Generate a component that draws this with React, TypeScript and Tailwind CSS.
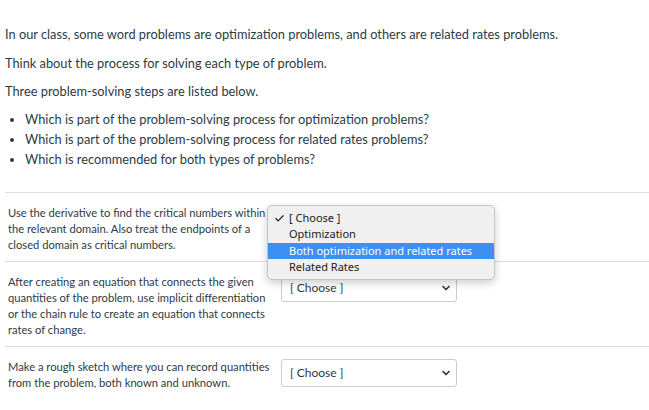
import { ChevronDown, Check } from "lucide-react";

const rows = [
  "Use the derivative to find the critical numbers within the relevant domain. Also treat the endpoints of a closed domain as critical numbers.",
  "After creating an equation that connects the given quantities of the problem, use implicit differentiation or the chain rule to create an equation that connects rates of change.",
  "Make a rough sketch where you can record quantities from the problem, both known and unknown.",
];

const options = ["[ Choose ]", "Optimization", "Both optimization and related rates", "Related Rates"];

function Select() {
  return (
    <div className="w-[176px] h-[28px] shrink-0 border border-[#c7cdd1] rounded-[3px] bg-white flex items-center justify-between pl-[8px] pr-[4px] text-[12px] text-[#2d3b45]">
      <span>[ Choose ]</span>
      <ChevronDown size={12} strokeWidth={3.5} className="text-[#2d3b45]" />
    </div>
  );
}

export default function App() {
  return (
    <div className="w-[649px] h-[410px] bg-white overflow-hidden pt-[25px] text-[#2d3b45]" style={{ fontFamily: "Lato, 'Noto Sans', sans-serif" }}>
      <div className="px-[5px] text-[12.8px] leading-[19px]">
        <p className="mb-[9.5px]">In our class, some word problems are optimization problems, and others are related rates problems.</p>
        <p className="mb-[9.5px]">Think about the process for solving each type of problem.</p>
        <p className="mb-[8px]">Three problem-solving steps are listed below.</p>
        <ul className="list-disc pl-[20px] leading-[20px]">
          <li>Which is part of the problem-solving process for optimization problems?</li>
          <li>Which is part of the problem-solving process for related rates problems?</li>
          <li>Which is recommended for both types of problems?</li>
        </ul>
      </div>

      <div className="relative mt-[23px] ml-[5px]">
        {rows.map((r, i) => (
          <div key={i} className="border-t border-[#dcdfe1] pt-[12px] pb-[8px] pl-[3px] flex items-start gap-[11px]">
            <div className="w-[262px] text-[11.2px] leading-[16px]">{r}</div>
            <Select />
          </div>
        ))}

        <div
          className="absolute left-[262px] top-[13px] w-[228px] bg-[#f0f0f0] border border-[#c4c4c4] rounded-[5px] shadow-[0_3px_8px_rgba(0,0,0,0.2)] py-[4px] text-[11px] text-[#1a1a1a]"
          style={{ fontFamily: "'Noto Sans', 'Liberation Sans', sans-serif" }}
        >
          {options.map((o, i) => (
            <div
              key={o}
              className={`h-[16.3px] flex items-center pl-[21px] relative ${i === 2 ? "bg-[#3d8ff2] text-white" : ""}`}
            >
              {i === 0 && <Check size={11} strokeWidth={2.5} className="absolute left-[6px]" />}
              {o}
            </div>
          ))}
        </div>
      </div>
    </div>
  );
}
